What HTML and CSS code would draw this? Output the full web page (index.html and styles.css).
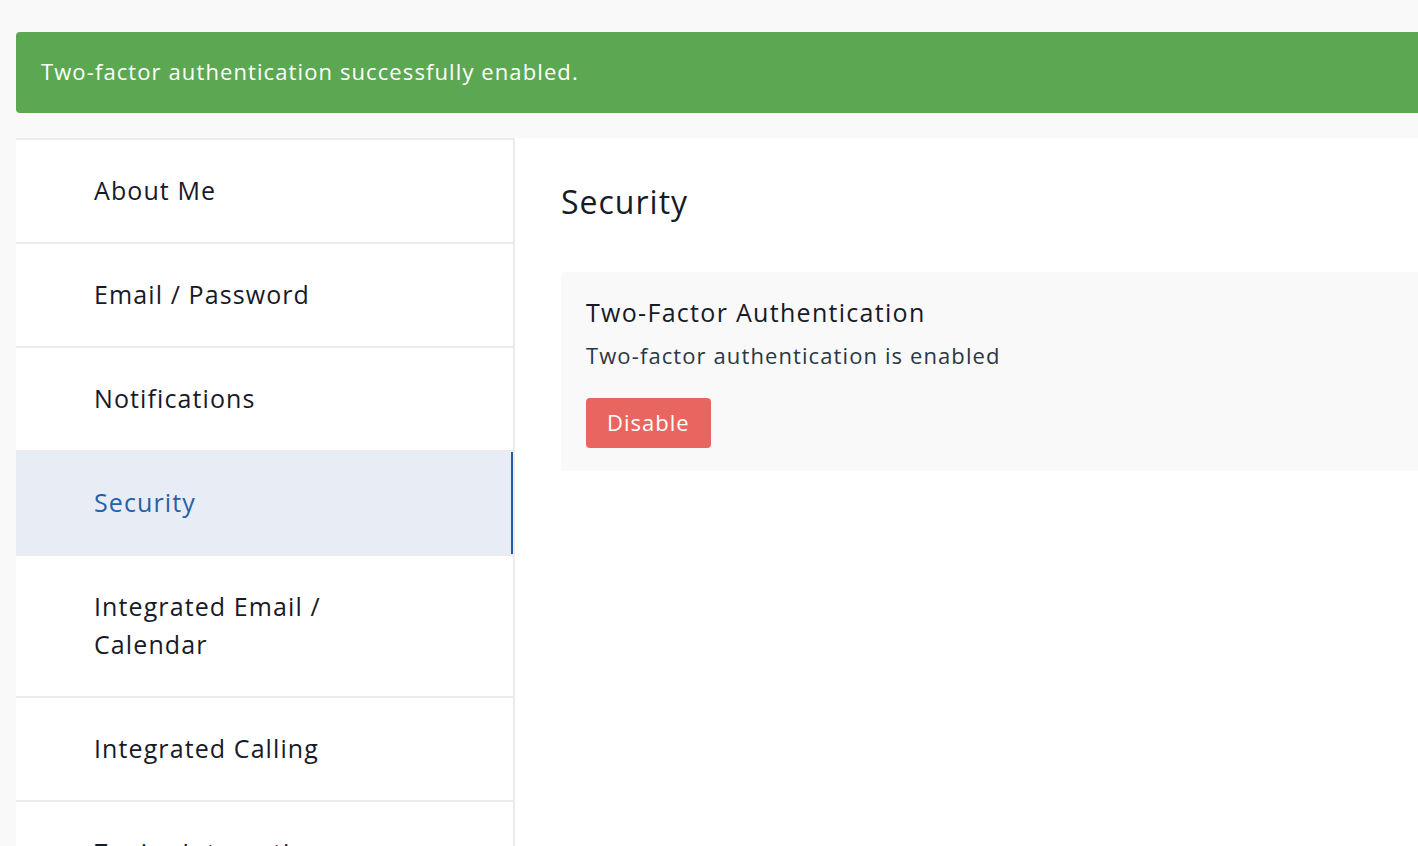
FILE: index.html
```html
<!DOCTYPE html>
<html lang="en">
<head>
  <meta charset="UTF-8">
  <meta name="viewport" content="width=device-width, initial-scale=1.0">
  <title>Settings - Security</title>
  <link rel="stylesheet" href="styles.css">
</head>
<body>
  <div class="page">
    <div class="alert alert-success">Two-factor authentication successfully enabled.</div>

    <div class="settings">
      <nav class="settings-nav">
        <a class="nav-item" href="#">About Me</a>
        <a class="nav-item" href="#">Email / Password</a>
        <a class="nav-item" href="#">Notifications</a>
        <a class="nav-item active" href="#">Security</a>
        <a class="nav-item" href="#">Integrated Email /<br>Calendar</a>
        <a class="nav-item" href="#">Integrated Calling</a>
        <a class="nav-item" href="#">Zapier Integration</a>
      </nav>

      <section class="settings-content">
        <h1>Security</h1>
        <div class="card">
          <h2>Two-Factor Authentication</h2>
          <p>Two-factor authentication is enabled</p>
          <button class="btn-danger">Disable</button>
        </div>
      </section>
    </div>
  </div>
</body>
</html>
```

FILE: styles.css
```css
html {
  overflow: hidden;
}
body {
  font-family: "Open Sans", Arial, sans-serif;
  margin: 0;
  padding: 32px 0 0 16px;
  background-color: #f9f9f9;
  color: #171a27;
}
.page {
  width: 1480px;
}
.alert {
  border-radius: 4px;
  padding: 0 25px 3px;
  height: 81px;
  box-sizing: border-box;
  display: flex;
  align-items: center;
  font-size: 22px;
  letter-spacing: 1.1px;
  margin-bottom: 25px;
}
.alert-success {
  background-color: #5ca852;
  color: white;
}
.settings {
  display: flex;
  background-color: white;
  min-height: 800px;
}
.settings-nav {
  width: 497px;
  flex-shrink: 0;
  border-top: 2px solid #ebebef;
  border-right: 2px solid #ebebef;
  display: flex;
  flex-direction: column;
}
.nav-item {
  display: block;
  padding: 31px 20px 33px 78px;
  font-size: 25px;
  letter-spacing: 1.1px;
  line-height: 38px;
  color: #171a27;
  text-decoration: none;
  border-bottom: 2px solid #ebebef;
}
.nav-item.active {
  background-color: #e8edf5;
  color: #2461a8;
  box-shadow: inset -2px 0 0 #1f5ea6;
}
.settings-content {
  flex: 1;
  padding: 40px 0 0 46px;
}
h1 {
  font-size: 32px;
  font-weight: 400;
  letter-spacing: 1px;
  line-height: 48px;
  margin: 0 0 46px;
}
.card {
  background-color: #f9f9f9;
  border-radius: 4px;
  padding: 23px 25px 23px;
}
h2 {
  font-size: 25px;
  font-weight: 400;
  letter-spacing: 1.3px;
  line-height: 34px;
  margin: 0;
}
.card p {
  font-size: 22px;
  letter-spacing: 1.1px;
  line-height: 30px;
  color: #2b3744;
  margin: 11px 0 28px;
}
.btn-danger {
  display: block;
  font-family: inherit;
  font-size: 22px;
  letter-spacing: 1px;
  background-color: #e96560;
  color: white;
  border: none;
  border-radius: 4px;
  height: 50px;
  padding: 0 21px 2px;
  cursor: pointer;
}
```
